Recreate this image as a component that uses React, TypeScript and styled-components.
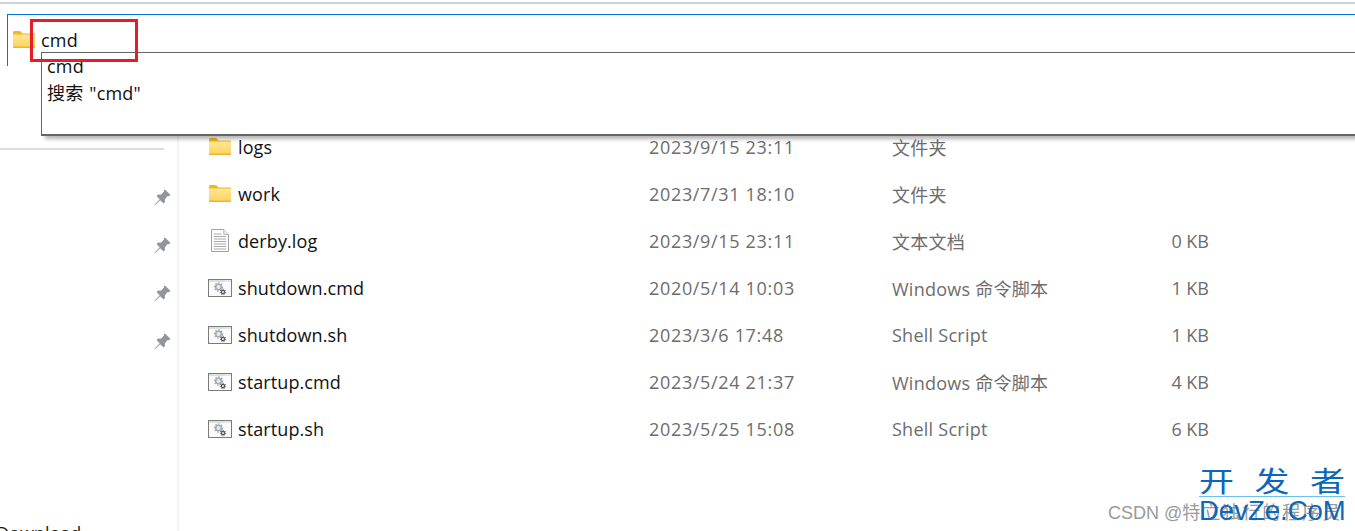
import styled, { createGlobalStyle } from "styled-components";

const GlobalStyle = createGlobalStyle`
  html, body {
    margin: 0;
    padding: 0;
    background: #ffffff;
    overflow: hidden;
  }
`;

const Page = styled.div`
  position: relative;
  width: 1355px;
  height: 531px;
  overflow: hidden;
  background: #ffffff;
  font-family: "Open Sans", "Noto Sans CJK SC", sans-serif;
  color: #1a1a1a;
`;

const TopStrip = styled.div`
  height: 2px;
  margin-top: 2px;
  background: #ccd3d9;
`;

const Header = styled.div`
  height: 130px;
  padding: 10px 0 0 7px;
  box-sizing: border-box;
`;

const AddressBar = styled.div`
  display: flex;
  align-items: center;
  gap: 6px;
  height: 52px;
  padding: 0 0 2px 5px;
  box-sizing: border-box;
  border-top: 1px solid #0078d7;
  border-left: 1px solid #0078d7;
`;

const AddressText = styled.span`
  font-size: 18px;
  line-height: 24px;
  letter-spacing: 0.2px;
  color: #111;
`;

const Suggest = styled.div`
  position: absolute;
  left: 41px;
  top: 52px;
  right: -4px;
  height: 84px;
  box-sizing: border-box;
  border: 1px solid #666;
  border-bottom-width: 2px;
  background: #fff;
  box-shadow: 4px 3px 4px rgba(0, 0, 0, 0.3);
  padding: 0 0 0 5px;
  overflow: hidden;
`;

const SuggestItem = styled.div`
  height: 27px;
  font-size: 18px;
  line-height: 27px;
  letter-spacing: 0.2px;
  word-spacing: 1px;
  color: #111;
`;

const RedMark = styled.div`
  position: absolute;
  left: 30px;
  top: 19px;
  width: 108px;
  height: 43px;
  box-sizing: border-box;
  border: 3px solid #e81c24;
`;

const Body = styled.div`
  display: flex;
  height: 397px;
`;

const Sidebar = styled.div`
  width: 179px;
  height: 100%;
  box-sizing: border-box;
  border-right: 2px solid #f5f5f6;
  display: flex;
  flex-direction: column;
  overflow: hidden;
`;

const SideRule = styled.div`
  width: 164px;
  height: 2px;
  margin-top: 14px;
  background: #dcdcdc;
  flex: none;
`;

const PinColumn = styled.div`
  display: flex;
  flex-direction: column;
  align-items: flex-end;
  gap: 31px;
  width: 171px;
  margin-top: 39px;
  flex: none;
`;

const PinSlot = styled.div`
  width: 17px;
  height: 17px;
`;

const SideLabel = styled.div`
  margin: 171px 0 0 -4px;
  font-size: 18px;
  line-height: 24px;
  white-space: nowrap;
  flex: none;
`;

const List = styled.div`
  flex: 1;
  margin-top: -11px;
`;

const Row = styled.div`
  display: grid;
  grid-template-columns: 30px 411px 243px 160px 157px;
  align-items: center;
  height: 47px;
  padding-left: 29px;
`;

const IconCell = styled.div<{ $indent: number }>`
  display: flex;
  align-items: center;
  padding-left: ${(p) => p.$indent}px;
`;

const Name = styled.span`
  font-size: 18px;
  letter-spacing: 0.1px;
  color: #111;
`;

const Meta = styled.span`
  font-size: 18px;
  color: #6d6d6d;
`;

const DateText = styled(Meta)`
  letter-spacing: 0.67px;
`;

const TypeText = styled(Meta)`
  letter-spacing: 0.25px;
`;

const Size = styled(Meta)`
  text-align: right;
`;

const Watermark = styled.div`
  position: absolute;
  left: 1108px;
  top: 502px;
  font-family: "Liberation Sans", "Noto Sans CJK SC", sans-serif;
  font-size: 18px;
  line-height: 22px;
  color: #9a9a9a;
  white-space: nowrap;
`;

const WatermarkName = styled.span`
  letter-spacing: 2px;
`;

const Brand = styled.div`
  position: absolute;
  left: 1199px;
  top: 463px;
  width: 146px;
  color: #0b68b8;
  text-align: center;
`;

const BrandTop = styled.div`
  height: 33px;
  border-bottom: 1px solid #6cc4ee;
`;

const BrandGlyphs = styled.div`
  display: flex;
  justify-content: space-between;
  font-family: "Noto Sans CJK SC", sans-serif;
  font-size: 35px;
  line-height: 33px;
  transform: scaleY(0.8);
`;

const BrandBottom = styled.div`
  font-family: "Liberation Sans", sans-serif;
  font-size: 27.5px;
  line-height: 27px;
  white-space: nowrap;
`;

const FolderIcon = () => (
  <svg width="22" height="17" viewBox="0 0 23 17" preserveAspectRatio="none">
    <defs>
      <linearGradient id="folderFill" x1="0" y1="0" x2="0" y2="1">
        <stop offset="0" stopColor="#fee793" />
        <stop offset="1" stopColor="#fcd25c" />
      </linearGradient>
    </defs>
    <path d="M0 1.500C0 .7.5 0 1.300 0h5.400c.6 0 1 .2 1.400.6L10 2.500h13V5H0z" fill="#f4b71e" />
    <path d="M0 3.500h23V16a1 1 0 0 1-1 1H1a1 1 0 0 1-1-1z" fill="url(#folderFill)" />
    <path d="M0 15.500h23V16a1 1 0 0 1-1 1H1a1 1 0 0 1-1-1z" fill="#edb431" />
  </svg>
);

const DocIcon = () => (
  <svg width="18" height="23" viewBox="0 0 19 23" preserveAspectRatio="none">
    <path d="M.5.5h13l5 5v17H.5z" fill="#fdfdfd" stroke="#9d9d9d" />
    <path d="M13.500.5v5h5" fill="#eee" stroke="#b5b5b5" />
    <path d="M3 5h8M3 7.500h13M3 10h13M3 12.500h13M3 15h13M3 17.500h13M3 20h13" stroke="#a8a8a8" />
  </svg>
);

const ScriptIcon = () => (
  <svg width="24" height="18" viewBox="0 0 24 18">
    <rect x=".5" y=".5" width="23" height="17" fill="#fbfbfb" stroke="#7b7b7b" />
    <rect x="1" y="1" width="22" height="2" fill="#dedede" />
    <path d="M17 2h5" stroke="#fff" strokeDasharray="1 1" />
    <circle cx="10.500" cy="8" r="2.800" fill="#e8ebee" stroke="#a3abb3" strokeWidth="1.600" />
    <circle cx="10.500" cy="8" r="4" fill="none" stroke="#a3abb3" strokeWidth="1.300" strokeDasharray="1.500 1.500" />
    <circle cx="15" cy="13" r="1.600" fill="#fff" stroke="#555" strokeWidth="1.300" />
    <circle cx="15" cy="13" r="2.700" fill="none" stroke="#555" strokeWidth="1" strokeDasharray="1.200 1.200" />
  </svg>
);

const PinIcon = () => (
  <svg width="17" height="17" viewBox="0 0 17 17">
    <path d="M11 .5l5.500 5.500-1.500 1.300-1.200-.3-3 3.300.2 2.700-1.500 1.500-3.300-3.300L1 16.500l-.5-.5 5.200-5.700-3.200-3.200L4 5.600l2.700.2 3.300-3-.3-1.200z" fill="#8f979e" />
  </svg>
);

type Entry = {
  name: string;
  date: string;
  type: string;
  size?: string;
  icon: "folder" | "doc" | "script";
};

const entries: Entry[] = [
  { name: "logs", date: "2023/9/15 23:11", type: "文件夹", icon: "folder" },
  { name: "work", date: "2023/7/31 18:10", type: "文件夹", icon: "folder" },
  { name: "derby.log", date: "2023/9/15 23:11", type: "文本文档", size: "0 KB", icon: "doc" },
  { name: "shutdown.cmd", date: "2020/5/14 10:03", type: "Windows 命令脚本", size: "1 KB", icon: "script" },
  { name: "shutdown.sh", date: "2023/3/6 17:48", type: "Shell Script", size: "1 KB", icon: "script" },
  { name: "startup.cmd", date: "2023/5/24 21:37", type: "Windows 命令脚本", size: "4 KB", icon: "script" },
  { name: "startup.sh", date: "2023/5/25 15:08", type: "Shell Script", size: "6 KB", icon: "script" },
];

const icons = {
  folder: <FolderIcon />,
  doc: <DocIcon />,
  script: <ScriptIcon />,
};

const iconIndent = { folder: 1, doc: 3, script: 0 };

const App = () => {
  return (
    <Page>
      <GlobalStyle />
      <TopStrip />
      <Header>
        <AddressBar>
          <FolderIcon />
          <AddressText>cmd</AddressText>
        </AddressBar>
      </Header>
      <Suggest>
        <SuggestItem>cmd</SuggestItem>
        <SuggestItem>搜索 "cmd"</SuggestItem>
      </Suggest>
      <RedMark />
      <Body>
        <Sidebar>
          <SideRule />
          <PinColumn>
            {[0, 1, 2, 3].map((i) => (
              <PinSlot key={i}>
                <PinIcon />
              </PinSlot>
            ))}
          </PinColumn>
          <SideLabel>Download</SideLabel>
        </Sidebar>
        <List>
          {entries.map((entry) => (
            <Row key={entry.name}>
              <IconCell $indent={iconIndent[entry.icon]}>{icons[entry.icon]}</IconCell>
              <Name>{entry.name}</Name>
              <DateText>{entry.date}</DateText>
              <TypeText>{entry.type}</TypeText>
              <Size>{entry.size}</Size>
            </Row>
          ))}
        </List>
      </Body>
      <Watermark>
        CSDN @<WatermarkName>特立独行的程序员</WatermarkName>
      </Watermark>
      <Brand>
        <BrandTop>
          <BrandGlyphs>
            <span>开</span>
            <span>发</span>
            <span>者</span>
          </BrandGlyphs>
        </BrandTop>
        <BrandBottom>DevZe.CoM</BrandBottom>
      </Brand>
    </Page>
  );
};

export default App;
